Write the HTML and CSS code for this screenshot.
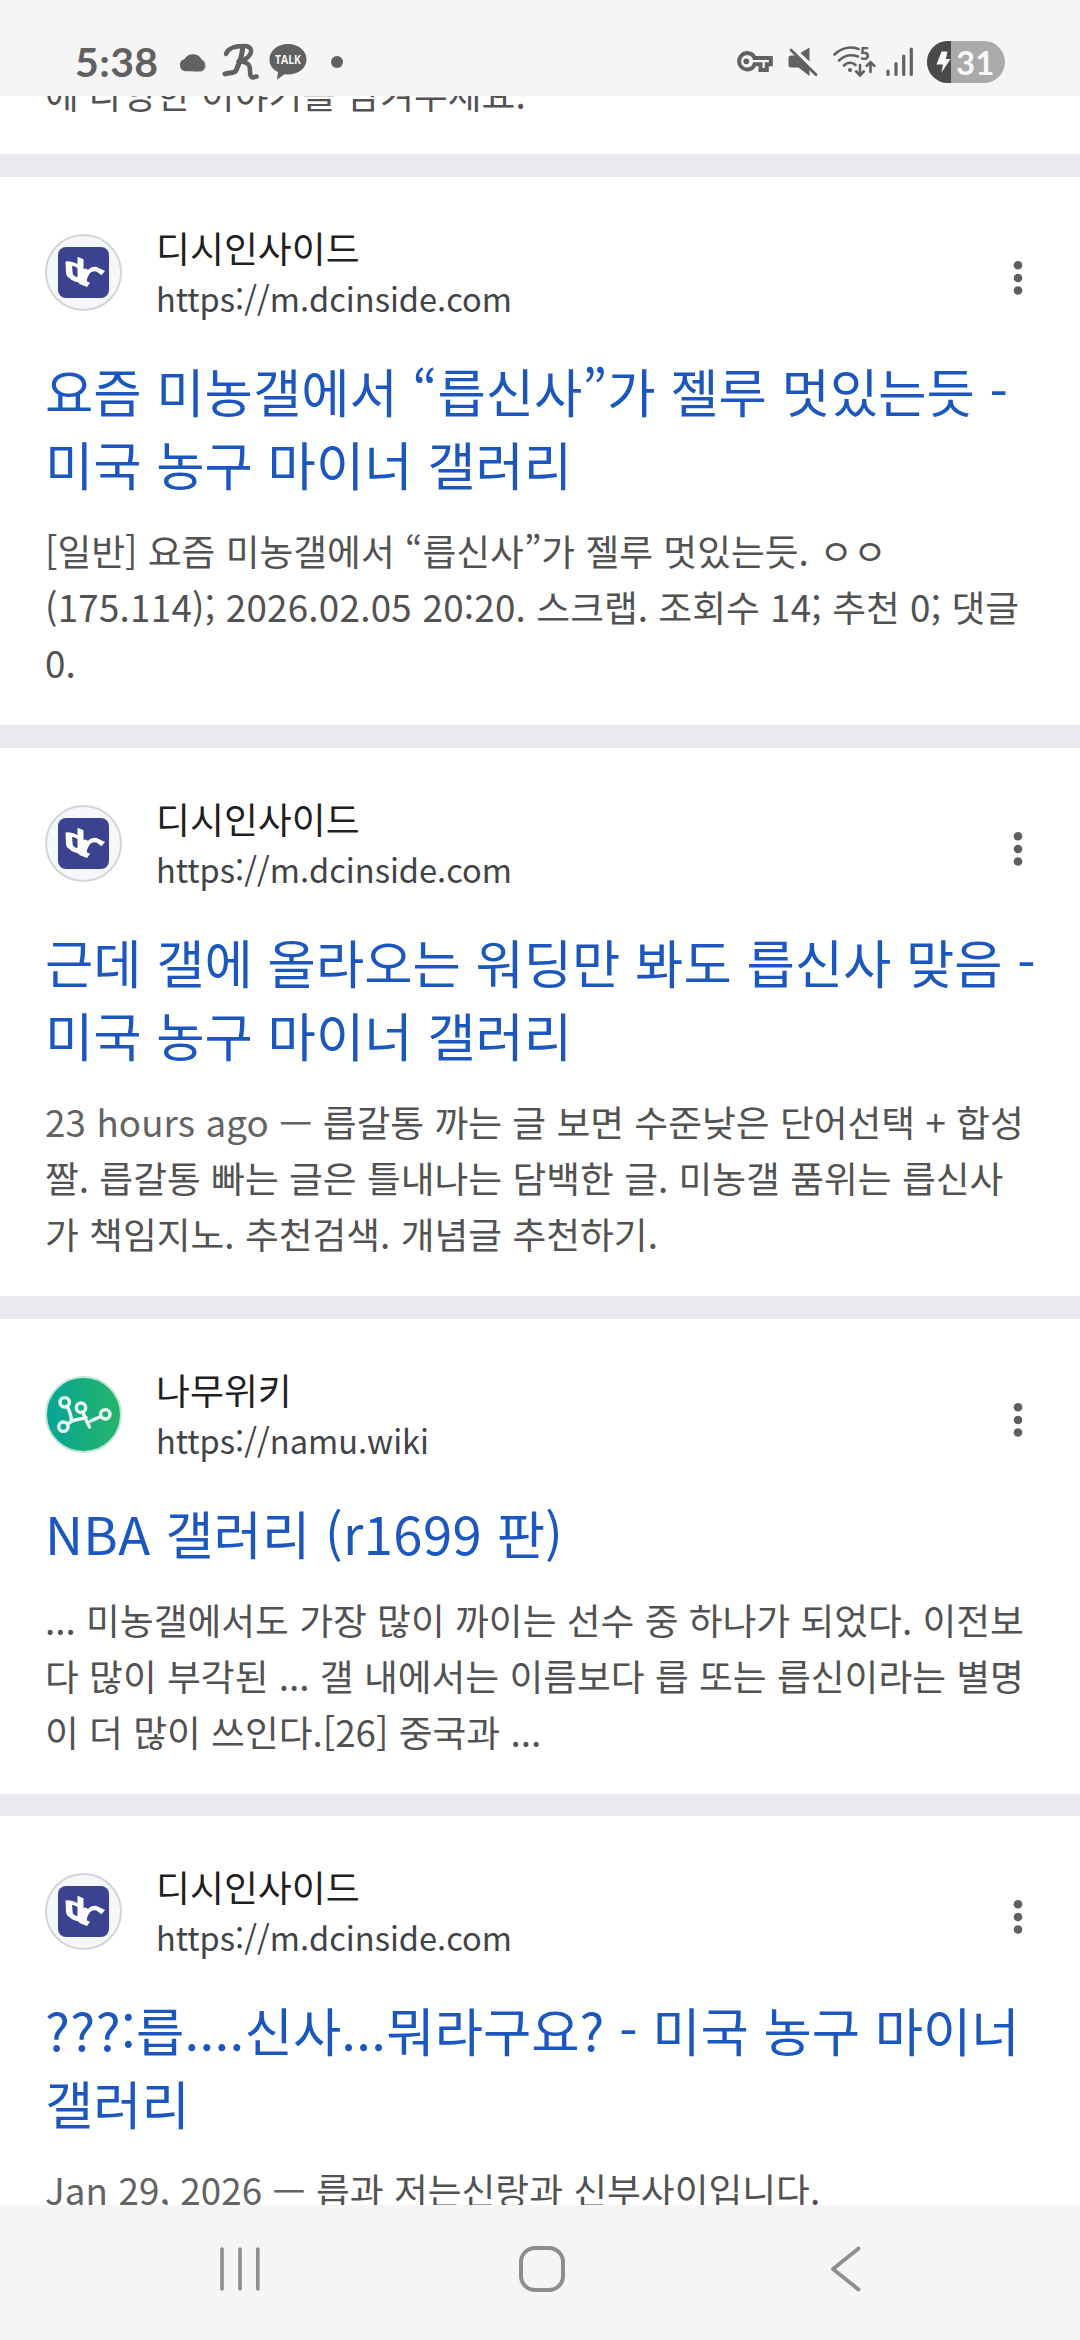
FILE: index.html
```html
<!DOCTYPE html>
<html lang="ko">
<head>
<meta charset="utf-8">
<title>검색결과</title>
<link rel="stylesheet" href="styles.css">
</head>
<body>
<svg width="0" height="0" class="defs" aria-hidden="true">
  <defs>
    <linearGradient id="leaf" x1="0" y1="0" x2="1" y2="0">
      <stop offset="0" stop-color="#06a596"/>
      <stop offset="1" stop-color="#27b469"/>
    </linearGradient>
    <symbol id="dc" viewBox="0 0 77 77">
      <circle cx="38.5" cy="38.5" r="37.5" fill="#f5f7fa" stroke="#d3d5d7" stroke-width="2"/>
      <rect x="13" y="13" width="51" height="51" rx="8" fill="#3b4391"/>
      <path fill="#fff" fill-rule="evenodd" d="M20.500 27.500Q26 26.500 32.500 30V22.700L38.500 25.300V35Q41 33.500 43 36Q46 32.500 51 32.800L60 37L56.500 41.300L51.500 37.500Q46 36.500 43.500 41.500Q41.500 44.500 42 47.500L45 48.700L42 52.900L35 50.300L32.500 48Q27 47 24.500 44Q21.500 43 21 39ZM27 32L27.800 40.500Q30 43 32.500 43V34Q30 32 27 32Z"/>
    </symbol>
    <symbol id="namu" viewBox="0 0 77 77">
      <circle cx="38.5" cy="38.5" r="37.5" fill="url(#leaf)" stroke="#c2e6dc" stroke-width="2"/>
      <g fill="none" stroke="#e9fbf4" stroke-width="3.4" stroke-linecap="round" stroke-linejoin="round">
        <circle cx="19.700" cy="26.300" r="4.700"/>
        <circle cx="36" cy="31.700" r="4.700"/>
        <circle cx="60.300" cy="38.300" r="4.700"/>
        <circle cx="18.400" cy="50.700" r="4.700"/>
        <path d="M22 30.500Q26 37 26.500 45M22.500 48L28 44.500L41 41.500M37.500 36L41 43.500L44.500 51M45.500 45L56 40.500"/>
      </g>
    </symbol>
    <symbol id="more" viewBox="0 0 12 38">
      <g fill="#5f5f5f"><circle cx="6" cy="6.300" r="4.300"/><circle cx="6" cy="19" r="4.300"/><circle cx="6" cy="31.500" r="4.300"/></g>
    </symbol>
  </defs>
</svg>
<div class="screen">
  <header class="status">
    <div class="status-left">
      <span class="clock">5:38</span>
      <svg class="i-cloud" width="30" height="20" viewBox="0 0 30 20"><path fill="#8c8c8c" d="M20 7a6.600 6.600 0 0 1 3 12.500H14V7Z"/><path fill="#616161" d="M6.500 19.300A6.300 6.300 0 0 1 5.500 7A9.700 9.700 0 0 1 23 8.500A6 6 0 0 1 20 19.300Z"/></svg>
      <svg class="i-r" width="38" height="38" viewBox="0 0 38 38"><g fill="none" stroke="#616161" stroke-width="4.500" stroke-linecap="round" stroke-linejoin="round"><path d="M4 11C6 5 14 3 22 3C30 3 31 9 26 14C23 17 20 18 16.500 18.500"/><path stroke-width="5" d="M20.500 6C20 13 17 21 14 27.500C12 31 7 29 3 31"/><path d="M18 18.500C25 19 28 21 28 27C28 31 28 34 31 34.500L34.500 33.500"/></g></svg>
      <svg class="i-talk" width="38" height="36" viewBox="0 0 38 36"><path fill="#616161" d="M19 0C29.500 0 37.500 6.500 37.500 15.500C37.500 24 29.500 30.500 19 30.500L15.500 30.200L8 35.500L9 28C3.500 25.500 .5 21 .5 15.500C.5 6.500 8.500 0 19 0Z"/><text x="19" y="20.200" text-anchor="middle" textLength="26" lengthAdjust="spacingAndGlyphs" class="talk">TALK</text></svg>
      <span class="more-dot"></span>
    </div>
    <div class="status-right">
      <svg class="i-key" width="38" height="22" viewBox="0 0 38 22"><path fill="none" stroke="#616161" stroke-width="4" d="M18.500 7H34.800V13.300H30.800V19H24.500V13.300H18.500C17.500 16.500 14.500 18.500 10.500 18.500A8.300 8.300 0 0 1 10.500 2C14.500 2 17.500 4 18.500 7Z"/><circle cx="10.300" cy="10.300" r="2.900" fill="#616161"/></svg>
      <svg class="i-mute" width="30" height="30" viewBox="0 0 30 30"><g fill="#616161"><path d="M12.500 6L21.500 .5V14.500Z"/><path d="M3 8.500H7L21.500 22.500V29L10.500 20.500H3Q.5 20.500 .5 18V11Q.5 8.500 3 8.500Z"/></g><path d="M3 3L28 27.700" stroke="#616161" stroke-width="2.800" stroke-linecap="round"/></svg>
      <svg class="i-wifi" width="44" height="32" viewBox="0 0 44 32"><g fill="none" stroke="#616161" stroke-width="2.600" stroke-linecap="round"><path d="M1.500 8.500C8 2 17 0 25.500 3"/><path d="M6 14.500C11 9.500 18 8 25 10.500"/><path d="M11 19.500C14.500 16 19.500 16 22.500 19"/><path d="M27 19V29M23.200 25.500L27 29.300L30.800 25.500M37.500 26V16M33.700 19.800L37.500 16L41.300 19.800"/></g><circle cx="17" cy="24" r="2" fill="#616161"/><text x="27" y="13.600" class="band">5</text></svg>
      <svg class="i-signal" width="28" height="30" viewBox="0 0 28 30"><g stroke="#616161" stroke-width="3.200" stroke-linecap="round"><path d="M2 24V27.500M10 16.500V27.500M17.700 9V27.500M25.300 2V27.500"/></g></svg>
      <div class="battery"><div class="level"><svg width="15" height="22" viewBox="0 0 15 22"><path fill="#fff" d="M5.500 .5H11.500L9.800 8H14.500L5.500 21.500L7 13.500H.5Z"/></svg></div><span>31</span></div>
    </div>
  </header>

  <main class="results">
    <section class="card card-first">
      <p class="snippet">에 다양한 이야기를 남겨주세요.</p>
    </section>

    <section class="card">
      <div class="source">
        <svg class="favicon"><use href="#dc"/></svg>
        <div class="site"><span class="name">디시인사이드</span><span class="url">https://m.dcinside.com</span></div>
        <svg class="menu"><use href="#more"/></svg>
      </div>
      <h3 class="title">요즘 미농갤에서 “릅신사”가 젤루 멋있는듯 -<br>미국 농구 마이너 갤러리</h3>
      <p class="snippet">[일반] 요즘 미농갤에서 “릅신사”가 젤루 멋있는듯. ㅇㅇ<br><span class="latin">(175.114); 2026.02.05 20:20.</span> 스크랩. 조회수 <span class="latin">14;</span> 추천 <span class="latin">0;</span> 댓글<br>0.</p>
    </section>

    <section class="card">
      <div class="source">
        <svg class="favicon"><use href="#dc"/></svg>
        <div class="site"><span class="name">디시인사이드</span><span class="url">https://m.dcinside.com</span></div>
        <svg class="menu"><use href="#more"/></svg>
      </div>
      <h3 class="title">근데 갤에 올라오는 워딩만 봐도 릅신사 맞음 -<br>미국 농구 마이너 갤러리</h3>
      <p class="snippet"><span class="date">23 hours ago — </span>릅갈통 까는 글 보면 수준낮은 단어선택 + 합성<br>짤. 릅갈통 빠는 글은 틀내나는 담백한 글. 미농갤 품위는 릅신사<br>가 책임지노. 추천검색. 개념글 추천하기.</p>
    </section>

    <section class="card card-short">
      <div class="source">
        <svg class="favicon"><use href="#namu"/></svg>
        <div class="site"><span class="name">나무위키</span><span class="url">https://namu.wiki</span></div>
        <svg class="menu"><use href="#more"/></svg>
      </div>
      <h3 class="title"><span class="latin">NBA</span> 갤러리 <span class="latin">(r1699</span> 판)</h3>
      <p class="snippet">... 미농갤에서도 가장 많이 까이는 선수 중 하나가 되었다. 이전보<br>다 많이 부각된 ... 갤 내에서는 이름보다 릅 또는 릅신이라는 별명<br>이 더 많이 쓰인다.[26] 중국과 ...</p>
    </section>

    <section class="card">
      <div class="source">
        <svg class="favicon"><use href="#dc"/></svg>
        <div class="site"><span class="name">디시인사이드</span><span class="url">https://m.dcinside.com</span></div>
        <svg class="menu"><use href="#more"/></svg>
      </div>
      <h3 class="title"><span class="latin">???:</span>릅<span class="latin">....</span>신사<span class="latin">...</span>뭐라구요? - 미국 농구 마이너<br>갤러리</h3>
      <p class="snippet"><span class="date">Jan 29, 2026 — </span>릅과 저는신랑과 신부사이입니다.</p>
    </section>
  </main>

  <nav class="navbar">
    <svg width="44" height="50" viewBox="0 0 44 50"><path d="M4 5V45M22 5V45M39.800 5V45" stroke="#8e8e8e" stroke-width="3.600" stroke-linecap="round"/></svg>
    <svg class="home" width="50" height="50" viewBox="0 0 50 50"><rect x="4" y="4" width="42" height="42" rx="14" fill="none" stroke="#8e8e8e" stroke-width="4"/></svg>
    <svg width="34" height="50" viewBox="0 0 34 50"><path d="M29.500 4.500L4 25L29.500 45.500" fill="none" stroke="#8e8e8e" stroke-width="3.800" stroke-linecap="round" stroke-linejoin="round"/></svg>
  </nav>
</div>
</body>
</html>
```
FILE: styles.css
```css
* { box-sizing: border-box; }
body {
  margin: 0;
  background: #fff;
  font-family: "Noto Sans CJK KR", "Noto Sans", sans-serif;
}
svg { display: block; flex: none; }
.defs { position: absolute; }
.screen {
  width: 1080px;
  height: 2340px;
  overflow: hidden;
  display: flex;
  flex-direction: column;
}

/* status bar */
.status {
  flex: none;
  height: 96px;
  padding: 28px 75px 0 75px;
  display: flex;
  justify-content: space-between;
  background: #f5f5f5;
}
.status-left, .status-right {
  height: 68px;
  display: flex;
  align-items: center;
}
.clock {
  width: 104px;
  font: 700 41px/44px Lato, sans-serif;
  letter-spacing: .4px;
  color: #616161;
}
.i-r { margin-left: 13px; }
.i-talk { margin-left: 9px; }
.more-dot {
  width: 12px;
  height: 12px;
  margin-left: 24px;
  border-radius: 50%;
  background: #616161;
}
.talk { font: 700 13px "Open Sans", sans-serif; fill: #f5f5f5; }
.band { font: 700 17px "Open Sans", sans-serif; fill: #616161; }
.i-mute { margin-left: 14px; }
.i-wifi { margin-left: 15px; }
.i-signal { margin-left: 9px; }
.battery {
  width: 78px;
  height: 42px;
  margin-left: 13px;
  border-radius: 21px;
  overflow: hidden;
  display: flex;
  align-items: center;
  background: #aaa;
  font: 700 33px/42px Lato, sans-serif;
  color: #f8f8f8;
}
.level {
  flex: none;
  width: 24px;
  height: 42px;
  margin-right: 5px;
  padding: 10px 0 0 9px;
  background: #4a4a4a;
}

/* results */
.results {
  height: 2109px;
  overflow: hidden;
}
.card {
  padding: 57px 0 34.3px 45px;
  border-bottom: 23px solid #e8eaed;
  white-space: nowrap;
}
.card-first { padding-top: 0; padding-bottom: 33.1px; margin-top: -31.5px; }
.card-short { border-bottom-width: 22px; }
.source {
  display: flex;
  height: 77px;
}
.favicon { width: 77px; height: 77px; }
.site {
  flex: 1;
  display: flex;
  flex-direction: column;
  margin: -12px 0 0 34px;
}
.name {
  font-size: 36.9px;
  line-height: 51px;
  color: #1f1f1f;
}
.url {
  font-size: 32.6px;
  line-height: 50px;
  color: #414447;
}
.menu {
  width: 12px;
  height: 38px;
  margin: 25px 56px 0 0;
}
.title {
  margin: 42.5px 0 22px;
  font-size: 52.5px;
  line-height: 73px;
  font-weight: 400;
  color: #1b57bf;
}
.title .latin { letter-spacing: .4px; }
.snippet {
  margin: 0;
  font-size: 36.75px;
  line-height: 56.4px;
  color: #525252;
}
.date { color: #636363; letter-spacing: .1px; }
.latin { letter-spacing: .25px; }

/* navigation bar */
.navbar {
  flex: none;
  height: 135px;
  padding: 39px 0 0 218px;
  display: flex;
  background: #f5f5f5;
}
.home { margin: 0 262px 0 255px; }
```
